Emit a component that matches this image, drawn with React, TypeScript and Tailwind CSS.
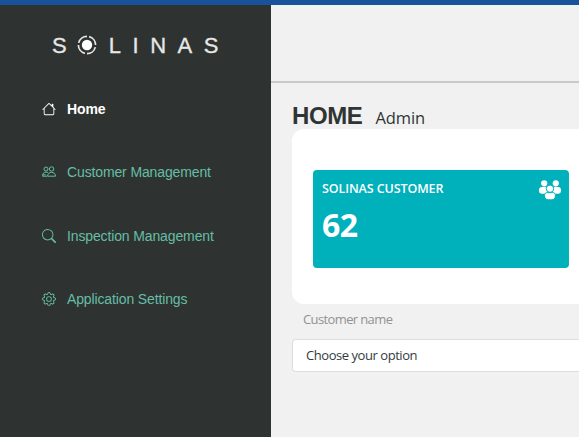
import React from "react";
import { BsHouse, BsSearch, BsGear } from "react-icons/bs";

const sans = "font-['Liberation_Sans',Arial,sans-serif]";
const humanist = "font-['Open_Sans','Noto_Sans',sans-serif]";

function Ring() {
  return (
    <svg viewBox="0 0 20 20" className="h-5 w-5" fill="none" stroke="#e4e7e5">
      <circle cx="10" cy="10" r="5.2" fill="#fff" stroke="none" />
      <circle cx="10" cy="10" r="8.6" strokeWidth="1.7" pathLength="100" strokeDasharray="21 4" strokeDashoffset="-4" />
    </svg>
  );
}

function Logo() {
  return (
    <div className={`${sans} ml-[52px] flex h-[22px] w-[166.5px] items-center justify-between text-[22px] leading-[22px] text-[#e6e8e7] [-webkit-text-stroke:0.3px_#e6e8e7]`}>
      <span className="-mr-[1px] pt-px">S</span>
      <Ring />
      <span className="pt-px">L</span>
      <span className="pt-px">I</span>
      <span className="pt-px">N</span>
      <span className="pt-px">A</span>
      <span className="pt-px">S</span>
    </div>
  );
}

function TwoPeople() {
  return (
    <svg viewBox="0 0 14 12" className="h-3 w-3.5" fill="none" stroke="currentColor" strokeWidth="1">
      <circle cx="4" cy="3" r="2" />
      <circle cx="9.6" cy="3" r="2.2" />
      <path d="M5.6 10.2c0-5.2 7.9-5.2 7.9 0z" />
      <path d="M5 10.2H.6c0-2.9 1.4-4.1 3.4-4.1.9 0 1.6.2 2.2.7M.8 8.8h2.8" />
    </svg>
  );
}

function Group() {
  return (
    <svg viewBox="0 0 22 20" className="mt-px h-5 w-[22px]" fill="#fff">
      <circle cx="5.2" cy="3.3" r="3.1" />
      <circle cx="16.8" cy="3.3" r="3.1" />
      <rect x="0" y="7.1" width="8.8" height="6.6" rx="3" />
      <rect x="13.2" y="7.1" width="8.8" height="6.6" rx="3" />
      <g stroke="#00b0bb" strokeWidth="1">
        <circle cx="11" cy="8.7" r="3.7" />
        <path d="M5.6 15.6c0-2.2 1-3 2.8-3h5.2c1.8 0 2.8.8 2.8 3 0 2.8-1.4 4.2-3.8 4.2H9.4c-2.4 0-3.8-1.4-3.8-4.2z" />
      </g>
    </svg>
  );
}

const items = [
  { label: "Home", icon: <BsHouse size={14} />, active: true },
  { label: "Customer Management", icon: <TwoPeople />, active: false },
  { label: "Inspection Management", icon: <BsSearch size={14} />, active: false },
  { label: "Application Settings", icon: <BsGear size={14} />, active: false },
];

export default function App() {
  return (
    <div className="flex h-[437px] w-[579px] flex-col overflow-hidden bg-[#f1f1f1]">
      <div className="h-[5px] shrink-0 bg-[#17529b]" />
      <div className="flex min-h-0 flex-1">
        <aside className="w-[271px] shrink-0 bg-[#2e3331] pt-[29px]">
          <Logo />
          <nav className={`${sans} mt-[40.5px] flex flex-col gap-[39.5px] pl-[42px] text-[14px] leading-6 tracking-[-0.13px]`}>
            {items.map((item) => (
              <a key={item.label} className={`flex h-6 items-center gap-[11px] ${item.active ? "font-bold text-white" : "text-[#66bda5]"}`}>
                {item.icon}
                <span>{item.label}</span>
              </a>
            ))}
          </nav>
        </aside>
        <main className={`${humanist} w-[308px]`}>
          <header className="h-[78px] border-b-2 border-[#c9c9c9]" />
          <div className="pl-[21px] text-[#2f3533]">
            <div className="flex h-[46px] items-baseline gap-[13px] pt-[17px]">
              <h1 className={`${sans} text-[24px] leading-8 font-bold tracking-[-0.4px]`}>HOME</h1>
              <span className="text-[16.5px] leading-6 tracking-[-0.1px]">Admin</span>
            </div>
            <section className="h-[175px] rounded-l-[12px] bg-white pt-[41px] pl-[21px]">
              <div className="flex h-[98px] w-[256px] justify-between rounded-[4px] bg-[#00b0bb] pt-[9px] pr-2 pl-[9px] text-white">
                <div className="pt-px">
                  <div className="text-[12.5px] leading-[18px] font-semibold tracking-[-0.1px] whitespace-nowrap">SOLINAS CUSTOMER</div>
                  <div className="mt-[7px] text-[32px] leading-10 font-bold tracking-[-0.5px]">62</div>
                </div>
                <Group />
              </div>
            </section>
            <label className="block pt-[6px] pl-[11px] text-[13px] leading-[18px] tracking-[-0.62px] text-[#929292]">Customer name</label>
            <div className="mt-[11px] flex h-[33px] items-center rounded-l-[4px] border border-r-0 border-[#dedede] bg-white pl-[13px] text-[13px] tracking-[-0.45px] text-[#333b40]">
              Choose your option
            </div>
          </div>
        </main>
      </div>
    </div>
  );
}
